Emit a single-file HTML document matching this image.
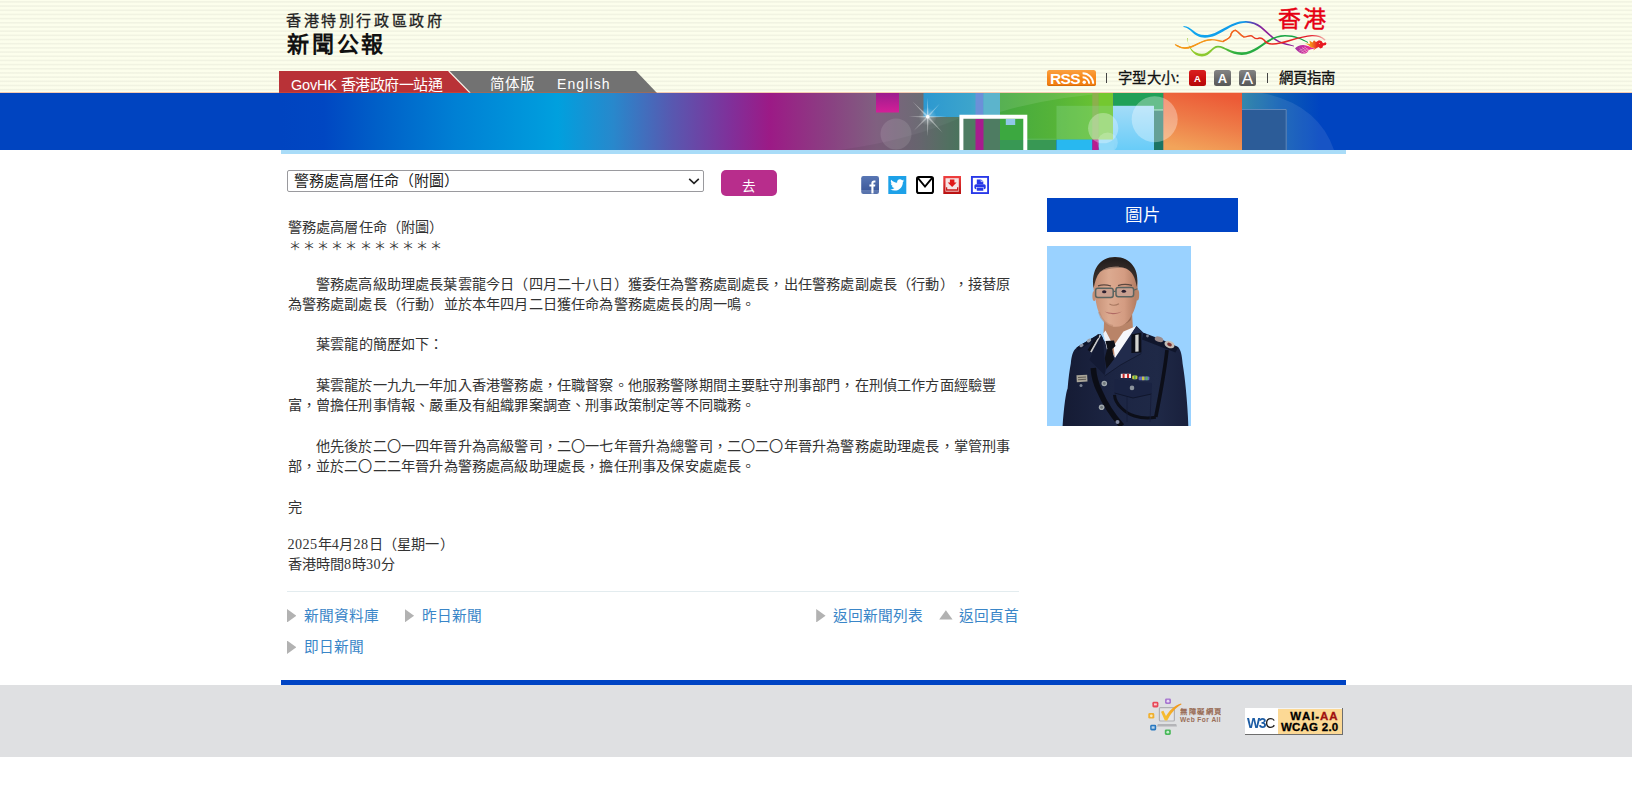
<!DOCTYPE html>
<html lang="zh-HK">
<head>
<meta charset="utf-8">
<title>警務處高層任命（附圖）</title>
<style>
html,body{margin:0;padding:0;background:#fff;}
body{text-spacing-trim:space-all;font-kerning:none;width:1632px;height:800px;position:relative;overflow:hidden;font-family:"Liberation Sans",sans-serif;color:#333;}
.abs{position:absolute;}
#hdr{left:0;top:0;width:1632px;height:93px;background-color:#fcfeec;background-image:repeating-linear-gradient(to bottom,#fcfeec 0px,#fcfeec 0.6px,#f1f3e2 1.6px,#f1f3e2 2.2px,#fcfeec 3.2px,#fcfeec 4.18px);}
#hdrline{left:0;top:92px;width:1632px;height:1px;background:rgba(228,96,56,0.32);z-index:2;}
#band{left:0;top:93px;width:1632px;height:57px;background:#0044c0;}
#subline{left:281px;top:150px;width:1065px;height:4px;background:#a9dcf8;}
.sans{font-family:"Liberation Sans",sans-serif;}
#t1{left:286px;top:11px;font-size:15px;letter-spacing:2.6px;color:#222;-webkit-text-stroke:0.3px #222;line-height:20px;white-space:nowrap;width:158.4px;text-align:justify;text-align-last:justify;}
#t2{left:287px;top:32px;font-size:22px;letter-spacing:2.8px;color:#111;line-height:26px;white-space:nowrap;font-weight:bold;width:99.2px;text-align:justify;text-align-last:justify;}
.ln{position:absolute;left:287.5px;white-space:nowrap;font-size:14.17px;line-height:20px;height:20px;color:#333;text-align:justify;text-align-last:justify;}
.dg{letter-spacing:0.4px;font-family:"Liberation Serif",serif;}
.lk{position:absolute;white-space:nowrap;font-size:14.7px;line-height:20px;height:20px;color:#3a86c8;text-align:justify;text-align-last:justify;}
.tri{position:absolute;background:#b2b2b2;}
.tr{width:9.4px;height:13.4px;clip-path:polygon(0 0,100% 50%,0 100%);}
.tu{width:13.4px;height:9.4px;clip-path:polygon(50% 0,100% 100%,0 100%);}
</style>
</head>
<body>
<div id="hdr" class="abs"></div>
<div id="hdrline" class="abs"></div>
<div id="band" class="abs"></div>
<div id="subline" class="abs"></div>

<div id="t1" class="abs sans">香港特別行政區政府</div>
<div id="t2" class="abs sans">新聞公報</div>

<svg class="abs" style="left:270px;top:70px" width="400" height="24" viewBox="270 70 400 24">
<polygon points="449,71 636,71 657,93 470,93" fill="#727272"/>
<polygon points="279,71 448.5,71 470,93 279,93" fill="#b93237"/>
<line x1="448.7" y1="71" x2="470.2" y2="93" stroke="#f4ece4" stroke-width="1.1"/>
</svg>
<div class="abs sans" style="left:291px;top:75px;font-size:14.5px;line-height:20px;color:#fff;white-space:nowrap;letter-spacing:-0.2px">GovHK <span style="display:inline-block;vertical-align:top;font-size:15px;letter-spacing:-0.45px;width:101.9px;text-align:justify;text-align-last:justify">香港政府一站通</span></div>
<div class="abs sans" style="left:490px;top:73.6px;font-size:14.5px;line-height:20px;color:#fff;white-space:nowrap;width:43.5px;text-align:justify;text-align-last:justify">简体版</div>
<div class="abs sans" style="left:557px;top:74px;font-size:14px;line-height:20px;color:#fff;white-space:nowrap;letter-spacing:1.1px">English</div>

<div class="abs" style="left:1047px;top:69.5px;width:49px;height:16.5px;border-radius:2.5px;background:linear-gradient(to bottom,#fba040 0%,#f78a1e 45%,#f07c10 100%);box-shadow:inset 0 -1px 0 #d86c08"></div>
<div class="abs sans" style="left:1050px;top:70px;font-size:15.5px;line-height:17px;font-weight:bold;color:#fff;letter-spacing:-0.7px;white-space:nowrap">RSS</div>
<svg class="abs" style="left:1082px;top:71px" width="13" height="14" viewBox="0 0 13 14"><circle cx="2.2" cy="11.3" r="1.7" fill="#fff"/><path d="M0.6,6.2 A6.6,6.6 0 0 1 7.2,12.8" fill="none" stroke="#fff" stroke-width="1.9"/><path d="M0.6,2.2 A10.6,10.6 0 0 1 11.2,12.8" fill="none" stroke="#fff" stroke-width="1.9"/></svg>
<div class="abs" style="left:1105.5px;top:73px;width:1px;height:10px;background:#444"></div>
<div class="abs" style="left:1117.5px;top:68px;font-size:14.4px;line-height:20px;color:#111;white-space:nowrap;-webkit-text-stroke:0.3px #111;width:62px;text-align:justify;text-align-last:justify">字型大小:</div>
<div class="abs" style="left:1189px;top:69.5px;width:17px;height:16.5px;border-radius:2.5px;background:linear-gradient(to bottom,#d82020 0%,#cc1010 50%,#b40808 100%)"></div>
<div class="abs sans" style="left:1189px;top:69.5px;width:17px;text-align:center;font-size:9.5px;line-height:17px;font-weight:bold;color:#fff">A</div>
<div class="abs" style="left:1214px;top:69.5px;width:17px;height:16.5px;border-radius:2.5px;background:linear-gradient(to bottom,#848484 0%,#6c6c6c 50%,#585858 100%)"></div>
<div class="abs sans" style="left:1214px;top:69.5px;width:17px;text-align:center;font-size:13px;line-height:17.5px;font-weight:bold;color:#fff">A</div>
<div class="abs" style="left:1239px;top:69.5px;width:17px;height:16.5px;border-radius:2.5px;background:linear-gradient(to bottom,#848484 0%,#6c6c6c 50%,#585858 100%)"></div>
<div class="abs sans" style="left:1239px;top:69.5px;width:17px;text-align:center;font-size:17px;line-height:18px;color:#fff">A</div>
<div class="abs" style="left:1267px;top:73px;width:1px;height:10px;background:#444"></div>
<div class="abs" style="left:1278.5px;top:68px;font-size:14.4px;line-height:20px;color:#111;white-space:nowrap;-webkit-text-stroke:0.3px #111;width:56px;text-align:justify;text-align-last:justify">網頁指南</div>

<svg class="abs" style="left:1170px;top:0" width="170" height="62" viewBox="1170 0 170 62">
<defs>
<linearGradient id="lg1" gradientUnits="userSpaceOnUse" x1="1183" y1="0" x2="1294" y2="0"><stop offset="0" stop-color="#10a8f0"/><stop offset="0.55" stop-color="#1098e8"/><stop offset="0.62" stop-color="#5048b8"/><stop offset="0.72" stop-color="#8c2098"/><stop offset="1" stop-color="#8c2098"/></linearGradient>
<linearGradient id="lg2" gradientUnits="userSpaceOnUse" x1="1175" y1="0" x2="1325" y2="0"><stop offset="0" stop-color="#f49818"/><stop offset="0.3" stop-color="#f49020"/><stop offset="0.42" stop-color="#f06020"/><stop offset="0.55" stop-color="#e83020"/><stop offset="0.9" stop-color="#e41828"/><stop offset="1" stop-color="#e41828" stop-opacity="0.3"/></linearGradient>
<linearGradient id="lg3" gradientUnits="userSpaceOnUse" x1="1187" y1="0" x2="1308" y2="0"><stop offset="0" stop-color="#98cc28"/><stop offset="0.2" stop-color="#88c830"/><stop offset="0.4" stop-color="#30b040"/><stop offset="1" stop-color="#10a048"/></linearGradient>
<linearGradient id="lg4" gradientUnits="userSpaceOnUse" x1="1305" y1="0" x2="1322" y2="0"><stop offset="0" stop-color="#f8b028"/><stop offset="0.35" stop-color="#f49018"/><stop offset="0.7" stop-color="#ea2a20"/><stop offset="1" stop-color="#e81820"/></linearGradient>
<linearGradient id="lg5" gradientUnits="userSpaceOnUse" x1="1295" y1="0" x2="1315" y2="0"><stop offset="0" stop-color="#98209c"/><stop offset="0.6" stop-color="#d81494"/><stop offset="1" stop-color="#e8108c"/></linearGradient>
</defs>
<path d="M1183.5,26.1 C1192,26.4 1194,35.2 1205,35.1 C1219,34.9 1229,20.8 1246,20.9 C1264,21 1269,38.5 1283,42.6 C1288,44.1 1291,44.7 1294,45.7 L1294,46.4 C1291,45.7 1288,45.3 1283,43.9 C1268,40.2 1263,22.8 1246,22.7 C1230,22.9 1220,37.7 1205,37.7 C1193,37.7 1191,27.7 1183.5,27.1 Z" fill="url(#lg1)"/>
<path d="M1187,38 C1188,47 1194,54 1202,53.8 C1210,53.4 1212,45.5 1218,45.7 C1225,45.9 1230,52.5 1242,52.3 C1258,51.9 1266,35.1 1285,34.9 C1295,34.9 1302,38.5 1308,42.1 L1308,42.9 C1302,39.9 1295,36.5 1285,36.5 C1267,36.7 1259,54.7 1242,54.9 C1230,55.1 1225,47.5 1218,47.5 C1212,47.5 1211,56.3 1202,56.5 C1193,56.5 1187.6,47 1187.7,38 Z" fill="url(#lg3)"/>
<path d="M1175.5,44.8 C1180,48 1186,49 1192,46.5 C1199,43.5 1204,39.5 1211,39.6 C1216,39.7 1219,41 1223,41.6 C1226,39 1229,39.5 1230.5,36 C1231,33 1232,31 1235.5,30.3 C1239,31.5 1240,35.5 1244,37 C1247,37 1249,35 1252,36 C1254,37.5 1255,39 1257.5,38.6 C1260,37.5 1262,38 1264,40 C1266,43 1268,44 1272,44 C1284,44.5 1296,36.5 1312,35.6 C1318,35.5 1322,37 1324.7,39.8" fill="none" stroke="url(#lg2)" stroke-width="1.4" stroke-linecap="round" stroke-linejoin="round"/>
<path d="M1176.5,45.6 C1181,48.4 1186,49 1192,46.6 C1199,43.6 1204,39.9 1211,40" fill="none" stroke="#f49818" stroke-width="1.2" stroke-linecap="round"/>
<path d="M1223,41.4 C1226,39 1229,39.5 1230.7,36 C1231,33 1232,31 1235.5,30.3 C1239,31.5 1240,35.5 1244,37" fill="none" stroke="#f26420" stroke-width="1.1" stroke-linejoin="round"/>
<path d="M1295,48.4 C1297,46 1300,44.8 1303.5,45 C1307,45.3 1310,47.2 1315,48.4 C1312,49 1309.5,49.4 1308.5,50.4 C1307.5,52 1306.5,53.4 1303.5,53.8 C1301,53.6 1298,51.8 1295,48.4 Z" fill="url(#lg5)" opacity="0.9"/>
<g stroke="#fbfde9" stroke-width="0.45" fill="none" opacity="0.8"><path d="M1299,51 L1305.5,47.4"/><path d="M1300.8,52.4 L1307.5,48.6"/><path d="M1302.8,53.6 L1309,49.8"/><path d="M1299.5,48.2 L1304.5,53"/><path d="M1302,47.2 L1307,52"/><path d="M1304.5,46.8 L1309,50.6"/></g>
<path d="M1305,43.3 L1310,43.9 L1309.5,40.6 L1312.5,42.5 L1314,40.3 L1316,42 L1319,40.2 L1321.5,41 L1323,43.3 L1325.5,42.2 L1326.5,43.5 L1325.8,45 L1323,45.8 L1322.6,47.4 L1320.5,48.5 L1318.5,47 L1316,48.6 L1313,50.6 L1314.8,48 L1311,47.6 L1308.5,45.2 Z" fill="url(#lg4)"/>
<circle cx="1319.4" cy="43.5" r="0.5" fill="#f7c9b8"/>
</svg>
<div class="abs sans" style="left:1277.5px;top:4.5px;font-size:23px;line-height:28px;color:#e60012;white-space:nowrap;width:48.5px;text-align:justify;text-align-last:justify;-webkit-text-stroke:0.45px #e60012">香港</div>

<svg class="abs" style="left:0;top:93px" width="1632" height="57" viewBox="0 93 1632 57">
<defs>
<linearGradient id="bg1" gradientUnits="userSpaceOnUse" x1="281" y1="0" x2="1000" y2="0">
<stop offset="0" stop-color="#0044c0"/>
<stop offset="0.06" stop-color="#0047c2"/>
<stop offset="0.135" stop-color="#0060c8"/>
<stop offset="0.243" stop-color="#0080d4"/>
<stop offset="0.385" stop-color="#00a0de"/>
<stop offset="0.462" stop-color="#2888cc"/>
<stop offset="0.544" stop-color="#5858b0"/>
<stop offset="0.625" stop-color="#80309a"/>
<stop offset="0.68" stop-color="#9c1a86"/>
<stop offset="0.762" stop-color="#8a4082"/>
<stop offset="0.828" stop-color="#806080"/>
<stop offset="0.89" stop-color="#6c6c74"/>
<stop offset="0.945" stop-color="#4e7c62"/>
<stop offset="1" stop-color="#4e7c62"/>
</linearGradient>
<linearGradient id="mg" x1="0" y1="0" x2="0" y2="1"><stop offset="0" stop-color="#9c1c8e"/><stop offset="1" stop-color="#d41f98"/></linearGradient>
<linearGradient id="cy" x1="0" y1="0" x2="1" y2="0"><stop offset="0" stop-color="#2c98d0"/><stop offset="0.6" stop-color="#3ca4cc"/><stop offset="1" stop-color="#5cb4c8"/></linearGradient>
<linearGradient id="gr" x1="0" y1="0" x2="1" y2="0"><stop offset="0" stop-color="#44a840"/><stop offset="0.5" stop-color="#56b438"/><stop offset="1" stop-color="#70c830"/></linearGradient>
<linearGradient id="or" x1="0.6" y1="0" x2="0.3" y2="1"><stop offset="0" stop-color="#ec5a36"/><stop offset="0.5" stop-color="#ee7c48"/><stop offset="1" stop-color="#f2a45a"/></linearGradient>
<linearGradient id="bl" gradientUnits="userSpaceOnUse" x1="1242" y1="0" x2="1320" y2="0"><stop offset="0" stop-color="#207ca4"/><stop offset="0.5" stop-color="#0c5cb4"/><stop offset="1" stop-color="#0044c0"/></linearGradient>
<linearGradient id="lb" x1="0" y1="0" x2="0" y2="1"><stop offset="0" stop-color="#a4dcf8"/><stop offset="1" stop-color="#68ccf8"/></linearGradient>
<filter id="sblur" x="-50%" y="-50%" width="200%" height="200%"><feGaussianBlur stdDeviation="0.45"/></filter>
<radialGradient id="star" cx="0.5" cy="0.5" r="0.5"><stop offset="0" stop-color="#fff" stop-opacity="0.95"/><stop offset="0.25" stop-color="#cfe8f4" stop-opacity="0.5"/><stop offset="1" stop-color="#fff" stop-opacity="0"/></radialGradient>
</defs>
<rect x="0" y="93" width="1632" height="57" fill="#0044c0"/>
<rect x="281" y="93" width="720" height="57" fill="url(#bg1)"/>
<!-- faint arc -->
<path d="M840,150 Q910,140 960,118 L960,150 Z" fill="#000" opacity="0.06"/>
<rect x="876" y="93" width="23" height="19.5" fill="url(#mg)"/>
<circle cx="896" cy="134" r="15.5" fill="#fff" opacity="0.11"/>
<rect x="923.5" y="93" width="77" height="24" fill="url(#cy)"/>
<rect x="975.5" y="93" width="8" height="24" fill="#6c90d8"/>
<rect x="983.5" y="93" width="17" height="24" fill="#5cb4cc"/>
<!-- star -->
<g transform="translate(927.7,116.7)">
<circle r="9" fill="url(#star)" opacity="0.65"/>
<g filter="url(#sblur)">
<path d="M-19,0 L0,-0.8 L19,0 L0,0.8 Z" fill="#fff" opacity="0.45"/>
<path d="M0,-19 L0.8,0 L0,20 L-0.8,0 Z" fill="#fff" opacity="0.5"/>
<path d="M-15,-15 L0.7,-0.7 L15,16 L-0.7,0.7 Z" fill="#fff" opacity="0.4"/>
<path d="M-14,14 L-0.7,-0.7 L12,-13 L0.7,0.7 Z" fill="#fff" opacity="0.35"/>
</g>
<circle r="1.8" fill="#fff" opacity="0.95" filter="url(#sblur)"/>
</g>
<!-- green -->
<rect x="1000" y="93" width="113" height="47" fill="url(#gr)"/>
<path d="M1000,112 Q1050,97 1112,93 L1000,93 Z" fill="#fff" opacity="0.10"/>
<rect x="1000" y="140" width="56.5" height="10" fill="#389854"/>
<rect x="1000" y="138.5" width="56" height="1.5" fill="#5cb85c" opacity="0.7"/>
<!-- frame -->
<rect x="975.5" y="119" width="8" height="31" fill="#a81c8e"/>
<rect x="1000" y="119" width="23" height="21" fill="#3ca840"/>
<rect x="1005.8" y="119" width="9.4" height="6" fill="#90c8e8"/>
<path d="M959.4,150 V114.7 H1027.3 V150 H1023.3 V118.7 H963.4 V150 Z" fill="#fff"/>
<!-- lighter green square -->
<rect x="1092.3" y="93" width="6.5" height="46.5" fill="#8cb04c"/>
<rect x="1098.8" y="93" width="14.7" height="46.5" fill="#74c830"/>
<rect x="1056.5" y="105.8" width="57" height="33.7" fill="#90dc98" opacity="0.30"/>
<rect x="1056.5" y="139.5" width="36" height="10.5" fill="#28b8f0"/>
<rect x="1092.3" y="139.5" width="6.5" height="10.5" fill="#b81c90"/>
<!-- dark green -->
<rect x="1113.5" y="93" width="49.8" height="57" fill="#20a058"/>
<rect x="1154" y="110.7" width="9.3" height="39.3" fill="#1c7464"/>
<rect x="1154" y="109" width="9.3" height="1.7" fill="#6cbc9c"/>
<rect x="1113" y="105.8" width="41" height="44.2" fill="url(#lb)"/>
<rect x="1098.8" y="139.5" width="15" height="10.5" fill="#74d0f8"/>
<!-- orange -->
<rect x="1163.3" y="93" width="78.7" height="57" fill="url(#or)"/>
<!-- blue right -->
<rect x="1242" y="93" width="100" height="57" fill="url(#bl)"/>
<path d="M1242,93 H1262 Q1318,104 1334,150 H1242 Z" fill="#fff" opacity="0.09"/>
<rect x="1242" y="109" width="44.7" height="41" fill="#2c5c98"/>
<path d="M1242,109.5 H1286.2 V150" fill="none" stroke="#6c94c4" stroke-width="1" opacity="0.8"/>
<!-- circles -->
<circle cx="1103.2" cy="128.2" r="15.1" fill="#fff" opacity="0.30"/>
<circle cx="1107.6" cy="142.8" r="10.2" fill="#fff" opacity="0.20"/>
<circle cx="1154.7" cy="119.2" r="23" fill="#fff" opacity="0.32"/>
<circle cx="1092.5" cy="128" r="0" fill="none"/>
</svg>

<div class="ln" style="left:287.60px;top:216.5px;width:155.87px">警務處高層任命（附圖）</div>
<div class="ln" style="left:288.70px;top:237.0px;width:153.70px;font-size:12px">＊＊＊＊＊＊＊＊＊＊＊</div>
<div class="ln" style="left:315.94px;top:274.2px;width:694.33px">警務處高級助理處長葉雲龍今日（四月二十八日）獲委任為警務處副處長，出任警務處副處長（行動），接替原</div>
<div class="ln" style="left:287.60px;top:294.3px;width:467.61px">為警務處副處長（行動）並於本年四月二日獲任命為警務處處長的周一鳴。</div>
<div class="ln" style="left:315.94px;top:334.4px;width:127.53px">葉雲龍的簡歷如下：</div>
<div class="ln" style="left:315.94px;top:375.0px;width:680.16px">葉雲龍於一九九一年加入香港警務處，任職督察。他服務警隊期間主要駐守刑事部門，在刑偵工作方面經驗豐</div>
<div class="ln" style="left:287.60px;top:395.2px;width:467.61px">富，曾擔任刑事情報、嚴重及有組織罪案調查、刑事政策制定等不同職務。</div>
<div class="ln" style="left:315.94px;top:435.8px;width:694.33px">他先後於二〇一四年晉升為高級警司，二〇一七年晉升為總警司，二〇二〇年晉升為警務處助理處長，掌管刑事</div>
<div class="ln" style="left:287.60px;top:456.0px;width:467.61px">部，並於二〇二二年晉升為警務處高級助理處長，擔任刑事及保安處處長。</div>
<div class="ln" style="left:287.60px;top:497.0px;width:14.17px">完</div>
<div class="ln" style="top:534.0px;width:166px"><span class="dg">2025</span>年<span class="dg">4</span>月<span class="dg">28</span>日（星期一）</div>
<div class="ln" style="top:554.2px;width:107.5px">香港時間<span class="dg">8</span>時<span class="dg">30</span>分</div>
<div class="abs" style="left:287px;top:170px;width:415px;height:19.5px;border:1px solid #9a9a9e;border-radius:2px;background:#fff"></div>
<div class="abs" style="left:293.5px;top:170.5px;font-size:15px;line-height:20px;color:#222;white-space:nowrap;width:165px;text-align:justify;text-align-last:justify">警務處高層任命（附圖）</div>
<svg class="abs" style="left:687px;top:176px" width="14" height="10" viewBox="0 0 14 10"><path d="M2.2,2.8 L7,7.4 L11.8,2.8" fill="none" stroke="#222" stroke-width="1.6"/></svg>
<div class="abs" style="left:720.5px;top:170px;width:56.5px;height:26px;border-radius:5px;background:#b82d8c"></div>
<div class="abs" style="left:720.5px;top:177px;width:56.5px;text-align:center;font-size:13.5px;line-height:20px;color:#fff">去</div>
<svg class="abs" style="left:861px;top:175.8px" width="128" height="18" viewBox="0 0 128 18">
<defs>
<linearGradient id="fbg" x1="0" y1="0" x2="0" y2="1"><stop offset="0" stop-color="#5876b4"/><stop offset="0.78" stop-color="#3f5b9c"/><stop offset="0.8" stop-color="#6079b1"/><stop offset="1" stop-color="#5470aa"/></linearGradient>
<linearGradient id="dlg" x1="0" y1="0" x2="0" y2="1"><stop offset="0" stop-color="#f04040"/><stop offset="1" stop-color="#b81010"/></linearGradient>
</defs>
<!-- fb -->
<rect x="0.2" y="0" width="17.8" height="18" rx="2.2" fill="url(#fbg)"/>
<path transform="translate(1.4,1.6) scale(0.88)" d="M10.2,18 V10.2 H8 V7.8 H10.2 V6.4 C10.2,4.3 11.4,3.3 13.2,3.3 C13.9,3.3 14.5,3.35 14.8,3.4 V5.6 H13.6 C12.8,5.6 12.6,6 12.6,6.6 V7.8 H14.7 L14.4,10.2 H12.6 V18 Z" fill="#fff"/>
<!-- twitter -->
<rect x="27.3" y="0" width="18" height="18" fill="#1da1e8"/>
<path transform="translate(28.6,1.6) scale(0.64)" d="M23,4.6 C22.2,5 21.3,5.2 20.4,5.3 C21.3,4.7 22,3.9 22.4,2.9 C21.5,3.4 20.5,3.8 19.5,4 C18.7,3.1 17.5,2.5 16.2,2.5 C13.7,2.5 11.7,4.5 11.7,7 C11.7,7.4 11.7,7.7 11.8,8 C8,7.8 4.7,6 2.5,3.3 C2.1,4 1.9,4.7 1.9,5.6 C1.9,7.100 2.700,8.500 3.900,9.300 C3.200,9.300 2.500,9.100 1.900,8.700 V8.800 C1.900,11 3.500,12.800 5.500,13.200 C5.100,13.300 4.700,13.400 4.300,13.400 C4,13.400 3.700,13.400 3.500,13.300 C4.100,15.100 5.700,16.400 7.700,16.400 C6.200,17.600 4.200,18.300 2.100,18.300 C1.700,18.300 1.400,18.300 1,18.200 C3,19.500 5.400,20.200 7.900,20.200 C16.200,20.200 20.700,13.400 20.700,7.500 V6.900 C21.600,6.300 22.400,5.500 23,4.600 Z" fill="#fff"/>
<!-- mail -->
<rect x="56" y="1" width="16" height="16" rx="1.8" fill="#fff" stroke="#000" stroke-width="2"/>
<path d="M56.8,1.8 L64,10.6 L71.2,1.8" fill="none" stroke="#000" stroke-width="1.9" stroke-linejoin="miter"/>
<!-- download -->
<rect x="82.300" y="0" width="17.7" height="18" fill="url(#dlg)"/>
<rect x="84.5" y="2.2" width="13.3" height="13.4" fill="#f6e4e4"/>
<path d="M88.9,3.6 H93.400 V6.6 H95.600 L91.150,11 L86.700,6.600 H88.900 Z" fill="#e01818"/>
<path d="M85.600,11.200 V14 H96.700 V11.200" fill="none" stroke="#c81818" stroke-width="1.300"/>
<!-- print -->
<rect x="110.900" y="0.900" width="16.200" height="16.200" fill="#fff" stroke="#2838e8" stroke-width="1.900"/>
<path d="M115.800,3.400 H120 L122.300,5.600 V8.200 H115.800 Z" fill="#2838e8"/>
<path d="M120,3.400 V5.600 H122.300" fill="none" stroke="#fff" stroke-width="0.600"/>
<rect x="113.400" y="8.200" width="11.300" height="5" rx="1.600" fill="#2838e8"/>
<rect x="115.600" y="11.400" width="6.900" height="3.600" fill="#2838e8" stroke="#fff" stroke-width="0.500"/>
</svg>

<div class="abs" style="left:287px;top:591px;width:732px;height:1px;background:#e3ecef"></div>
<div class="tri tr" style="left:287px;top:609px"></div>
<div class="lk" style="left:303.9px;top:605.8px;width:73.5px">新聞資料庫</div>
<div class="tri tr" style="left:404.7px;top:609px"></div>
<div class="lk" style="left:421.6px;top:605.8px;width:58.8px">昨日新聞</div>
<div class="tri tr" style="left:816.2px;top:609px"></div>
<div class="lk" style="left:833.1px;top:605.8px;width:88.2px">返回新聞列表</div>
<div class="tri tu" style="left:939.2px;top:610.2px"></div>
<div class="lk" style="left:959.3px;top:605.8px;width:58.8px">返回頁首</div>
<div class="tri tr" style="left:287px;top:640.5px"></div>
<div class="lk" style="left:303.9px;top:637.2px;width:58.8px">即日新聞</div>

<div class="abs" style="left:1047px;top:198px;width:191px;height:34px;background:#0044c4"></div>
<div class="abs" style="left:1047px;top:203px;width:191px;text-align:center;font-size:17.5px;line-height:24px;color:#fff;white-space:nowrap"><span style="display:inline-block;width:35px;text-align:justify;text-align-last:justify">圖片</span></div>
<svg class="abs" style="left:1047px;top:246px" width="144" height="180" viewBox="0 0 144 180">
<defs>
<linearGradient id="sk" x1="0" y1="0" x2="1" y2="0"><stop offset="0" stop-color="#c48e74"/><stop offset="0.35" stop-color="#dcaa90"/><stop offset="0.7" stop-color="#d49c82"/><stop offset="1" stop-color="#b07a60"/></linearGradient>
<linearGradient id="un" x1="0" y1="0" x2="1" y2="0"><stop offset="0" stop-color="#151b34"/><stop offset="0.4" stop-color="#1c2543"/><stop offset="0.75" stop-color="#1f2947"/><stop offset="1" stop-color="#19203c"/></linearGradient>
<radialGradient id="hr" cx="0.5" cy="0.9" r="0.8"><stop offset="0" stop-color="#6a5248"/><stop offset="0.55" stop-color="#3a302c"/><stop offset="1" stop-color="#241f1e"/></radialGradient>
</defs>
<rect width="144" height="180" fill="#9ad2ff"/>
<!-- body -->
<path d="M15.600,180 C17,160 19,146 20.600,142.500 C21.500,132 22.500,124 23.800,117.500 C24.500,110 26,104.500 28.800,102.500 C34,98 44,93 53,88 L67.500,111 L89.400,80 L96,86.500 C108,91 122,96 131,101 C134,104 135,110 135.600,117.500 C137,126 138,134 138.800,142.500 C140,155 141,168 141.300,180 Z" fill="url(#un)"/>
<!-- neck -->
<path d="M57.400,70 L56.500,88 L67.500,111 L86,84 L85,66 Z" fill="#b98468"/>
<path d="M57.400,72 C62,80 72,84 84,74 L85,66 L57.400,66 Z" fill="#9c6c54"/>
<!-- shirt collar -->
<path d="M56.300,87.500 L58.500,84.500 L67,101 L60.500,106 Z" fill="#eef0f6"/>
<path d="M89.400,80 L76.500,85.500 L66.500,100 L68,113 L75,104 Z" fill="#f6f7fb"/>
<!-- tie -->
<path d="M58.500,95 L67,94.400 L68.500,100 L65.300,103 L67,114 L59.500,123 L57.800,112 L60.300,102.500 Z" fill="#0e1018"/>
<!-- lapels -->
<path d="M53.500,87.800 L42.500,113.800 L57.500,129 L58.500,123 L57,108 L56,92 Z" fill="#131a34"/>
<path d="M89.400,80 L96,86.500 L94.400,107.500 L73.800,118.800 L57.500,130 L59.500,123 L68,112 Z" fill="#212b4c"/>
<path d="M94.400,107.500 L73.800,118.800 L57.500,130" fill="none" stroke="#10162c" stroke-width="0.800"/>
<!-- gorget patches -->
<path d="M84.400,88.500 L94.400,86.500 L94.400,106.500 L84.400,107 Z" fill="#0c0e18"/>
<path d="M88.300,89 L91.600,88.500 L91.600,105.500 L88.300,105.800 Z" fill="#d4d4d0"/>
<path d="M43,105.500 L52.500,88.800 L54,89.600 L44.600,106.500 Z" fill="#c8c8c8"/>
<path d="M40.500,104 L51,88 L52.500,88.800 L43,105.500 Z" fill="#0c0e18"/>
<!-- epaulettes -->
<path d="M96.300,86.900 L131.300,101.300 L128.500,106.500 L95,93.500 Z" fill="#10162c"/>
<circle cx="100.500" cy="90" r="1.400" fill="#7a8090"/>
<ellipse cx="112" cy="93.300" rx="4.400" ry="2.600" transform="rotate(18 112 93.300)" fill="#9c8c8c"/>
<ellipse cx="122.500" cy="98.500" rx="5.200" ry="3.600" transform="rotate(22 122.500 98.500)" fill="#c4beb8"/><ellipse cx="122.500" cy="98.500" rx="2.400" ry="1.700" transform="rotate(22 122.500 98.500)" fill="#7c3434"/>
<path d="M29.500,101.500 L51,88.500 L52,91.500 L31,104.500 Z" fill="#10162c"/>
<ellipse cx="34.500" cy="99.500" rx="2.200" ry="1.500" transform="rotate(-30 34.500 99.500)" fill="#8c94a4"/><ellipse cx="42" cy="94.500" rx="2.400" ry="1.600" transform="rotate(-30 42 94.500)" fill="#98a0ac"/>
<!-- head -->
<path d="M46.700,44 C44.500,27 52,12.500 68,11.500 C84,11 92,26 90.500,44 C91,56 87,68 80.500,75.500 C75,82 66,82.500 59.500,77.500 C52.500,72 49,60 48.500,52 Z" fill="url(#sk)"/>
<path d="M46.700,42 C43.500,24 53,10.900 68,10.900 C84,10.900 93,24 89.800,41 C88.500,32 85,25 79,22.500 C70,19.500 59,20.500 53,26 C49.500,30 47.800,36 46.700,42 Z" fill="url(#hr)"/>
<path d="M53,26 C59,20.500 70,19.500 79,22.500 C72,21.500 60,22 53,26 Z" fill="#7c6458" opacity="0.600"/>
<ellipse cx="47.200" cy="50" rx="1.800" ry="5" fill="#c48e74"/>
<ellipse cx="90.300" cy="49" rx="1.900" ry="5.400" fill="#b88468"/>
<!-- glasses -->
<rect x="48.600" y="42.200" width="17.600" height="9.200" rx="2.200" fill="#c8a090" stroke="#5a6460" stroke-width="1.500"/>
<rect x="69" y="41.600" width="17.600" height="9.200" rx="2.200" fill="#c8a090" stroke="#5a6460" stroke-width="1.500"/>
<path d="M66.200,45.600 L69,45.200" stroke="#5a6460" stroke-width="1.300"/>
<path d="M86.600,44.200 L90.500,42.800" stroke="#5a6460" stroke-width="1.200"/>
<ellipse cx="57.200" cy="45.800" rx="2.200" ry="1.500" fill="#2c2030"/><ellipse cx="76.800" cy="45.200" rx="2.200" ry="1.500" fill="#2c2030"/>
<path d="M51,39.800 C55,38.600 60,38.800 64,40" fill="none" stroke="#5c4840" stroke-width="1.300"/><path d="M71,39.600 C75,38.200 81,38.200 85,39.400" fill="none" stroke="#5c4840" stroke-width="1.300"/>
<path d="M62.500,58 C65,59.500 69,59.500 72,57.800" fill="none" stroke="#a87860" stroke-width="1.100"/>
<path d="M57.600,65.600 C62,67.400 70,67.400 74.800,65.400 C70,69 62,69 57.600,65.600 Z" fill="#b06a64"/>
<path d="M52,66 C54,74 60,79 66,80" fill="none" stroke="#b8846a" stroke-width="2" opacity="0.500"/>
<!-- lanyard right -->
<path d="M120,104 C118,122 113,150 108.800,171" fill="none" stroke="#0c0e18" stroke-width="3.600"/>
<path d="M67.500,148.800 C68,158 78,167 87.500,170 C95,172.500 102,172.500 108.800,171.300" fill="none" stroke="#0c0e18" stroke-width="3"/>
<!-- left strap -->
<path d="M46.300,122 C47,132 50,140 52.500,145 C58,158 66,170 75,180" fill="none" stroke="#0b0d16" stroke-width="5.600"/>
<!-- ribbons -->
<rect x="73.800" y="127.800" width="10.200" height="4.200" fill="#f0eaea"/><rect x="75.600" y="127.800" width="2" height="4.200" fill="#c42828"/><rect x="80" y="127.800" width="2" height="4.200" fill="#c42828"/>
<rect x="85.200" y="129.600" width="5.200" height="3.600" rx="1" fill="#c4cc3c"/><rect x="87" y="129.600" width="1.600" height="3.600" fill="#58a860"/>
<rect x="91.600" y="130.600" width="10.800" height="3.600" rx="1" fill="#6068b8"/><rect x="95" y="130.600" width="2.400" height="3.600" fill="#c8c440"/><rect x="98.600" y="130.600" width="2" height="3.600" fill="#58b060"/>
<!-- pocket -->
<path d="M67.500,133.500 L105,137 L104.500,148 L86,152 L67.500,147 Z" fill="#1a2342"/>
<path d="M67.500,147 L86,152 L104.500,148" fill="none" stroke="#10162c" stroke-width="1"/>
<path d="M80,151 L80,176 M104,149 L103,176" stroke="#151c38" stroke-width="0.800"/>
<circle cx="85" cy="141.900" r="2.300" fill="#8c949c"/>
<!-- buttons, badge -->
<circle cx="57.300" cy="137.500" r="2.800" fill="#a0a8ac"/><circle cx="57.300" cy="137.500" r="1.400" fill="#70787c"/>
<circle cx="54.600" cy="161.300" r="2.800" fill="#a0a8ac"/><circle cx="54.600" cy="161.300" r="1.400" fill="#70787c"/>
<rect x="29.600" y="129" width="10.700" height="6.900" fill="#a8a498" transform="rotate(-3 35 132)"/><rect x="31" y="130.800" width="8" height="1" fill="#5e5a54" transform="rotate(-3 35 132)"/><rect x="31" y="133" width="8" height="1" fill="#5e5a54" transform="rotate(-3 35 132)"/>
<circle cx="34" cy="139.500" r="1.500" fill="#7c8494"/>
<circle cx="70.500" cy="176" r="2" fill="#8088a0"/>
</svg>

<div class="abs" style="left:281px;top:680px;width:1065px;height:5px;background:#0044c4"></div>
<div class="abs" style="left:0;top:685px;width:1632px;height:72px;background:#dfe0e2"></div>
<svg class="abs" style="left:1146px;top:696px" width="78" height="42" viewBox="1146 696 78 42">
<defs><linearGradient id="ck" x1="0" y1="1" x2="1" y2="0"><stop offset="0" stop-color="#f8c838"/><stop offset="1" stop-color="#f09018"/></linearGradient></defs>
<rect x="1152.400" y="701.800" width="6" height="5.600" rx="1.400" fill="#e84858"/><rect x="1154" y="703.400" width="2.800" height="2" fill="#fbd0d4"/>
<rect x="1165" y="698.400" width="6" height="5.600" rx="1.400" fill="#a878d0"/><circle cx="1168" cy="701.200" r="1.400" fill="#e8d8f4"/>
<rect x="1148.300" y="713" width="6" height="5.600" rx="1.400" fill="#f0b030"/><circle cx="1151.300" cy="715.800" r="1.400" fill="#fbe8b8"/>
<rect x="1150.200" y="724.800" width="6" height="5.600" rx="1.400" fill="#2878c0"/><rect x="1151.600" y="726.300" width="3" height="2.400" fill="#b8d4ec"/>
<rect x="1164.800" y="729.400" width="6" height="5.600" rx="1.400" fill="#48b858"/><circle cx="1167.800" cy="732.200" r="1.400" fill="#c8ecd0"/>
<rect x="1159.400" y="707.600" width="15" height="13.400" rx="1" fill="#e4e4e6" stroke="#b0b0b4" stroke-width="1.200"/>
<path d="M1157.800,724 H1176.200 L1177,726.400 H1157 Z" fill="#b4b4b8"/>
<path d="M1161,711.800 L1163.400,710.800 L1166,716 C1169,711 1173.500,706 1181,703.400 L1181.600,704.200 C1175,708 1170.500,714 1167.200,720.600 L1164.800,720.600 Z" fill="url(#ck)"/>
</svg>
<div class="abs sans" style="left:1180px;top:708px;width:41px;font-size:7.4px;line-height:8px;font-weight:bold;color:#9a6e58;white-space:nowrap;text-align:justify;text-align-last:justify;overflow:hidden">無障礙網頁</div>
<div class="abs sans" style="left:1180px;top:715.500px;width:41px;font-size:6.600px;line-height:8px;font-weight:bold;color:#9a6e58;white-space:nowrap;letter-spacing:0.4px">Web For All</div>

<div class="abs" style="left:1244.500px;top:707.500px;width:97px;height:26px;background:#fcd995;border-right:1.500px solid #6e6e6e;border-bottom:1.500px solid #6e6e6e;box-shadow:inset 1px 1px 0 #f4f4f4"></div>
<div class="abs" style="left:1245px;top:708px;width:32.500px;height:25.500px;background:#fff"></div>
<div class="abs sans" style="left:1246.500px;top:713.500px;font-size:15.500px;line-height:17px;font-weight:bold;color:#1c5ca4;letter-spacing:-1.500px;white-space:nowrap;transform:scaleX(0.9);transform-origin:0 0">W3<span style="color:#222;font-weight:normal">C</span></div>
<div class="abs sans" style="left:1276.500px;top:709.800px;width:62px;text-align:right;font-size:11.500px;line-height:13px;font-weight:bold;color:#000;white-space:nowrap;letter-spacing:0.9px;-webkit-text-stroke:0.3px #000">WAI-<span style="color:#a01010;-webkit-text-stroke:0.3px #a01010">AA</span></div>
<div class="abs sans" style="left:1276.500px;top:720.800px;width:62px;text-align:right;font-size:11.500px;line-height:13px;font-weight:bold;color:#000;white-space:nowrap;letter-spacing:0.25px;-webkit-text-stroke:0.3px #000">WCAG 2.0</div>


</body>
</html>
